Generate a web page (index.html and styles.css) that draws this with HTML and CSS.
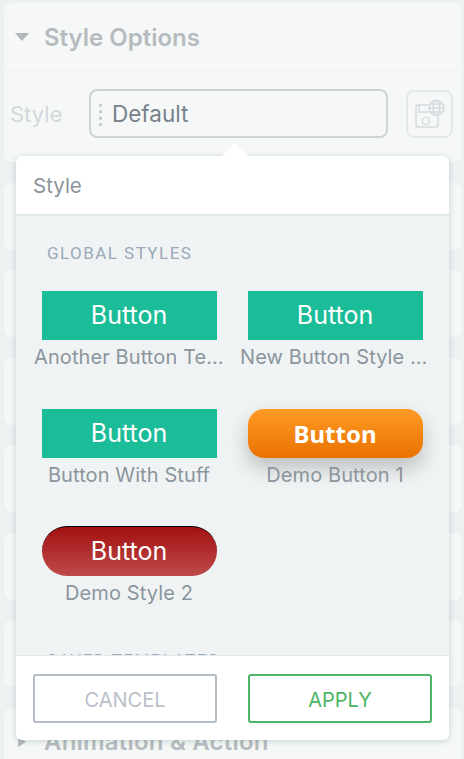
FILE: index.html
```html
<!DOCTYPE html>
<html lang="en">
<head>
    <meta charset="UTF-8">
    <meta name="viewport" content="width=device-width, initial-scale=1.0">
    <title>Style Options</title>
    <link rel="stylesheet" href="styles.css">
</head>
<body>

<div class="panels">
    <section class="panel panel-open">
        <div class="panel-title">
            <span class="caret caret-down"></span>
            <h2>Style Options</h2>
        </div>
        <div class="style-row">
            <span class="style-label">Style</span>
            <div class="style-select">
                <span class="drag-dots"></span>
                <span>Default</span>
            </div>
            <button class="save-btn" type="button">
                <svg width="31" height="30" viewBox="0 0 31 30" fill="none" stroke="#d3d9dd" stroke-width="1.4">
                    <path d="M14 6H4a2 2 0 0 0-2 2v18a2 2 0 0 0 2 2h18a2 2 0 0 0 2-2v-9"/>
                    <path d="M5 6v7h10"/>
                    <circle cx="12" cy="22" r="3.6"/>
                    <circle cx="22.5" cy="9" r="7.5"/>
                    <ellipse cx="22.5" cy="9" rx="3.2" ry="7.5"/>
                    <path d="M15 9h15M16.2 5h12.6M16.2 13h12.6"/>
                </svg>
            </button>
        </div>
    </section>
    <section class="panel"></section>
    <section class="panel"></section>
    <section class="panel"></section>
    <section class="panel"></section>
    <section class="panel"></section>
    <section class="panel"></section>
    <section class="panel panel-last">
        <div class="panel-title">
            <span class="caret caret-right"></span>
            <h2>Animation &amp; Action</h2>
        </div>
    </section>
</div>

<!-- style picker popup -->
<div class="popup">
    <span class="popup-arrow"></span>
    <div class="popup-head">Style</div>
    <div class="popup-body">
        <div class="group-label">Global Styles</div>
        <div class="style-grid">
            <div class="style-item">
                <div class="sample sample-green">Button</div>
                <div class="style-name">Another Button Template</div>
            </div>
            <div class="style-item">
                <div class="sample sample-green">Button</div>
                <div class="style-name">New Button Style Name</div>
            </div>
            <div class="style-item">
                <div class="sample sample-green">Button</div>
                <div class="style-name">Button With Stuff</div>
            </div>
            <div class="style-item">
                <div class="sample sample-orange">Button</div>
                <div class="style-name">Demo Button 1</div>
            </div>
            <div class="style-item">
                <div class="sample sample-red">Button</div>
                <div class="style-name">Demo Style 2</div>
            </div>
        </div>
        <div class="group-label group-saved">Saved Templates</div>
    </div>
    <div class="popup-foot">
        <button class="btn btn-cancel" type="button">CANCEL</button>
        <button class="btn btn-apply" type="button">APPLY</button>
    </div>
</div>

</body>
</html>
```

FILE: styles.css
```css
/* Page */
body {
    margin: 0;
    height: 100vh;
    overflow: hidden;
    background: #eef1f2;
    font-family: 'Inter', 'Roboto', sans-serif;
}

/* Faded panels behind the popup */
.panels {
    display: flex;
    flex-direction: column;
    gap: 20.5px;
    padding: 3px 2px 0 4px;
}

.panel {
    flex: none;
    height: 67px;
    background: #f6f8f8;
    border-radius: 8px;
}

.panel-open {
    height: 159px;
}

.panel-title {
    display: flex;
    align-items: center;
    height: 68px;
    padding-left: 11px;
    border-bottom: 1px solid #f0f3f3;
}

.panel-title h2 {
    margin: 0 0 0 15px;
    font-size: 24px;
    font-weight: 600;
    color: #b6bbbf;
}

.panel-last .panel-title {
    border-bottom: none;
}

.panel-last h2 {
    letter-spacing: 0.2px;
}

.caret {
    width: 0;
    height: 0;
    border-style: solid;
    border-color: transparent;
}

.caret-down {
    border-width: 8px 7px 0;
    border-top-color: #b2b6ba;
}

.caret-right {
    margin-left: 3px;
    margin-right: 3px;
    border-width: 5px 0 5px 8px;
    border-left-color: #b2b6ba;
}

/* Style row */
.style-row {
    display: flex;
    align-items: center;
    padding: 17px 9px 0 6px;
}

.style-label {
    width: 79px;
    font-size: 22px;
    color: #d3d8db;
}

.style-select {
    display: flex;
    align-items: center;
    gap: 10px;
    box-sizing: border-box;
    width: 299px;
    height: 49px;
    padding-left: 8px;
    border: 2px solid #cdd3d7;
    border-radius: 8px;
    font-size: 22.5px;
    color: #76818c;
}

.drag-dots {
    width: 3px;
    height: 24px;
    background: radial-gradient(circle, #c3c9cd 1.5px, transparent 1.6px) 0 0 / 3px 6.5px repeat-y;
}

.save-btn {
    display: flex;
    align-items: center;
    justify-content: center;
    box-sizing: border-box;
    width: 47px;
    height: 48px;
    margin-left: 18px;
    padding: 0;
    background: none;
    border: 2px solid #e4e8ea;
    border-radius: 8px;
}

/* Popup */
.popup {
    position: absolute;
    left: 16px;
    top: 156px;
    display: flex;
    flex-direction: column;
    width: 433px;
    height: 584px;
    background: #fff;
    border-radius: 6px;
    box-shadow: 0 1px 6px rgba(120, 150, 150, 0.4);
}

.popup-arrow {
    position: absolute;
    left: 206px;
    top: -13px;
    width: 0;
    height: 0;
    border-style: solid;
    border-width: 0 13px 13px;
    border-color: transparent transparent #fff;
}

.popup-head {
    flex: none;
    box-sizing: border-box;
    height: 60px;
    padding: 17px 17px 0;
    border-bottom: 2px solid #e2e9e9;
    font-size: 20.5px;
    color: #8b959c;
}

.popup-body {
    flex: 1;
    min-height: 0;
    overflow: hidden;
    background: #f0f3f4;
}

.group-label {
    margin: 27px 0 0 31px;
    font-family: 'Roboto', sans-serif;
    font-size: 17px;
    line-height: 20px;
    letter-spacing: 1.45px;
    text-transform: uppercase;
    color: #9aa8b8;
}

.group-saved {
    margin-top: 5px;
}

/* Style samples */
.style-grid {
    display: grid;
    grid-template-columns: 190px 190px;
    column-gap: 16px;
    padding: 28px 0 0 18px;
}

.style-item {
    height: 118px;
    min-width: 0;
    text-align: center;
}

.sample {
    box-sizing: border-box;
    width: 175px;
    height: 49px;
    margin: 0 auto;
    font-size: 25px;
    line-height: 49px;
    color: #fff;
}

.sample-green {
    background: #1bbd98;
}

.sample-orange {
    border-radius: 16px;
    background: linear-gradient(#ff9a26, #e97200);
    box-shadow: 0 10px 20px rgba(0, 0, 0, 0.22);
    font-family: 'Noto Sans', sans-serif;
    font-size: 24px;
    font-weight: 700;
}

.sample-red {
    height: 50px;
    margin-top: -1px;
    border-radius: 25px;
    border-top: 1px solid #000;
    background: linear-gradient(#a31010, #be4b4b);
}

.style-name {
    margin-top: 5px;
    font-size: 20px;
    line-height: 24px;
    letter-spacing: 0.1px;
    color: #8b959c;
    white-space: nowrap;
    overflow: hidden;
    text-overflow: ellipsis;
}

/* Footer */
.popup-foot {
    flex: none;
    display: flex;
    justify-content: space-between;
    box-sizing: border-box;
    height: 85px;
    padding: 18px 17px 0;
    border-top: 1px solid #e2e9e9;
}

.btn {
    box-sizing: border-box;
    width: 184px;
    height: 49px;
    padding: 3px 0 0;
    background: #fff;
    border-radius: 3px;
    font-family: 'Inter', 'Roboto', sans-serif;
    font-size: 20px;
}

.btn-cancel {
    border: 2px solid #b3bcc7;
    color: #b9c1ca;
}

.btn-apply {
    border: 2px solid #4bb663;
    color: #4bb663;
}
```
